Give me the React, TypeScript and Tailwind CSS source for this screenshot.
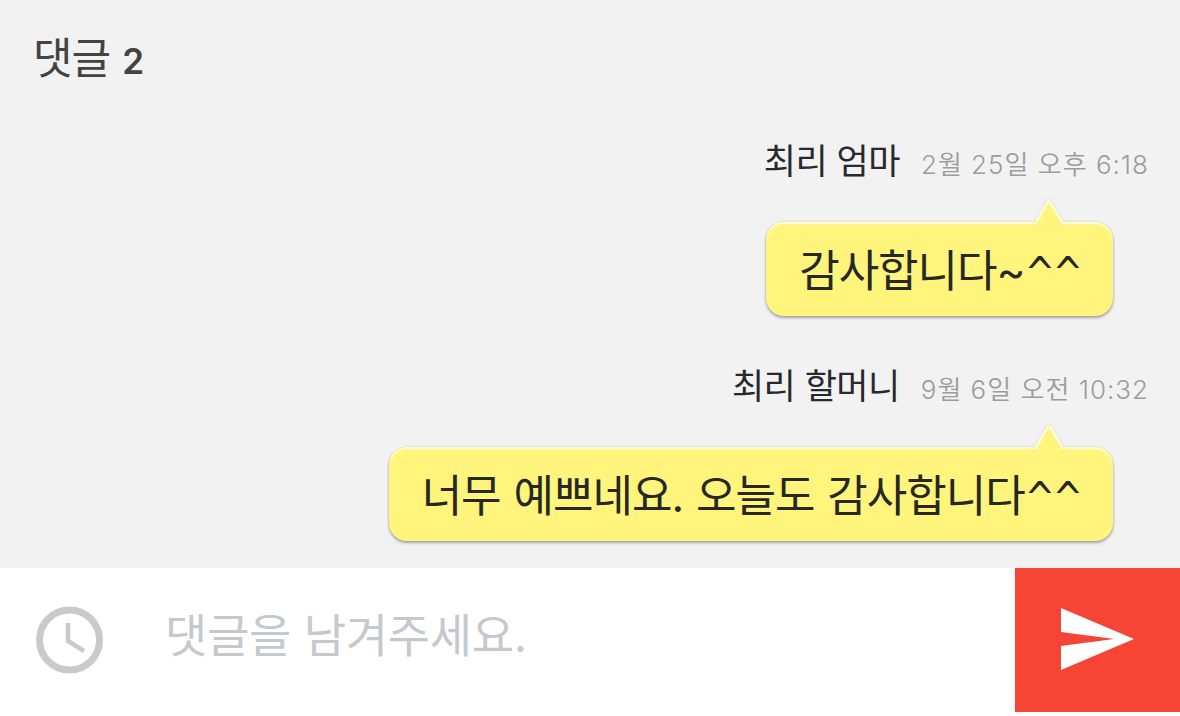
import React, { useState } from "react";

type Comment = {
  id: number;
  author: string;
  date: string;
  text: string;
};

const comments: Comment[] = [
  { id: 1, author: "최리 엄마", date: "2월 25일 오후 6:18", text: "감사합니다~^^" },
  {
    id: 2,
    author: "최리 할머니",
    date: "9월 6일 오전 10:32",
    text: "너무 예쁘네요. 오늘도 감사합니다^^",
  },
];

// "^^" uses a wider caret than the rest of the message
function CommentText({ text }: { text: string }) {
  return (
    <p className="flex items-baseline whitespace-pre pt-1 text-[44px] leading-[60px] tracking-[-1px] text-[#272823] [word-spacing:1.5px]">
      {text.split(/(\^+)/).map((part, i) => {
        if (part.startsWith("^")) {
          return (
            <span
              key={i}
              className="-mr-px origin-top -translate-y-2 scale-y-125 font-['DejaVu_Sans',sans-serif] text-[36px] leading-[44px] tracking-[-2px]"
            >
              {part}
            </span>
          );
        }
        return <span key={i}>{part}</span>;
      })}
    </p>
  );
}

function CommentItem({ comment }: { comment: Comment }) {
  return (
    <li className="flex h-[225px] flex-col items-end pr-8">
      <div className="flex h-[83px] items-baseline whitespace-nowrap">
        <span className="mr-[21px] text-[35px] leading-[44px] tracking-[-0.5px] text-[#28292d]">
          {comment.author}
        </span>
        <span className="-mr-px text-[26px] font-[350] leading-[44px] tracking-[1px] text-[#9c9c9c]">
          {comment.date}
        </span>
      </div>
      <div className="relative mr-[35px] flex h-[94px] items-center rounded-[18px] bg-[#fff57d] px-[33px] shadow-[inset_0_3px_2px_-1px_#fffde0,0_2px_3px_rgba(60,40,60,0.38),0_0_2px_rgba(0,0,0,0.16)]">
        <svg
          className="absolute right-[47px] -top-[23px] drop-shadow-[0_-1px_1px_rgba(0,0,0,0.08)]"
          width="34"
          height="32"
          viewBox="0 0 34 32"
        >
          <path d="M3 25 L15.5 3 Q17 0 18.5 3 L31 25 V30 H3Z" fill="#fff57d" />
          <path
            d="M3 25 L15.5 3.5 Q17 1.5 18.5 3.5 L31 25"
            fill="none"
            stroke="#fffcd0"
            strokeWidth="2.5"
          />
        </svg>
        <CommentText text={comment.text} />
      </div>
    </li>
  );
}

export default function App() {
  const [message, setMessage] = useState("");

  const handleSubmit = (e: React.FormEvent<HTMLFormElement>) => {
    e.preventDefault();
    setMessage("");
  };

  return (
    <div className="flex h-[716px] w-[1180px] flex-col overflow-hidden bg-white font-['Inter','Noto_Sans_CJK_KR',sans-serif]">
      <section className="h-[568px] bg-[#f2f2f2]">
        <h1 className="flex h-[139px] items-baseline gap-3 pl-[33px] pt-7 text-[#434343]">
          <span className="text-[43px] font-normal leading-[60px] tracking-[-1px]">
            댓글
          </span>
          <span className="text-[35px] font-semibold leading-[60px]">
            {comments.length}
          </span>
        </h1>
        <ul>
          {comments.map((comment) => (
            <CommentItem key={comment.id} comment={comment} />
          ))}
        </ul>
      </section>
      <form onSubmit={handleSubmit} className="flex h-[144px] bg-white">
        <button type="button" aria-label="이전 댓글" className="pl-[35px]">
          <svg width="69" height="68" viewBox="0 0 69 68" fill="none">
            <circle cx="34.5" cy="34" r="30" stroke="#cacaca" strokeWidth="7" />
            <path
              d="M33 17 V35 L49 45"
              stroke="#cacaca"
              strokeWidth="4.6"
            />
          </svg>
        </button>
        <input
          className="ml-[61px] h-[134px] min-w-0 flex-1 text-[46px] tracking-[-0.3px] text-[#272823] outline-none placeholder:text-[#c5c9cd]"
          placeholder="댓글을 남겨주세요."
          value={message}
          onChange={(e) => setMessage(e.target.value)}
        />
        <button
          type="submit"
          aria-label="보내기"
          className="flex w-[165px] items-center bg-[#f64435] pb-0.5 pl-[46px]"
        >
          <svg width="73" height="62" viewBox="0 0 73 62" fill="white">
            <path d="M0 0 L73 31 L0 62 V38 L53 31 L0 24Z" />
          </svg>
        </button>
      </form>
    </div>
  );
}
